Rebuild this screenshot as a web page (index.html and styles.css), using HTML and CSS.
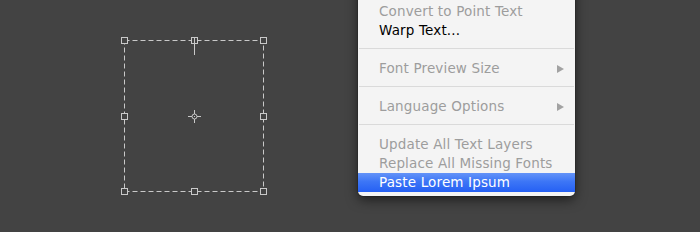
FILE: index.html
```html
<!DOCTYPE html>
<html>
<head>
<meta charset="utf-8">
<link rel="stylesheet" href="styles.css">
</head>
<body>
<div class="stage">
  <svg class="bbox" width="148" height="160" viewBox="0 0 148 160">
    <rect x="4.5" y="4.5" width="139" height="151" fill="none" stroke="#c9c9c9" stroke-width="1" stroke-dasharray="5 3"/>
    <g fill="#434343" stroke="#c9c9c9" stroke-width="1">
      <rect x="1.5" y="1.5" width="6" height="6"/>
      <rect x="71.5" y="1.5" width="6" height="6"/>
      <rect x="140.5" y="1.5" width="6" height="6"/>
      <rect x="1.5" y="77.5" width="6" height="6"/>
      <rect x="140.5" y="77.5" width="6" height="6"/>
      <rect x="1.5" y="152.5" width="6" height="6"/>
      <rect x="71.5" y="152.5" width="6" height="6"/>
      <rect x="140.5" y="152.5" width="6" height="6"/>
    </g>
    <line x1="74.5" y1="1" x2="74.5" y2="19" stroke="#c9c9c9" stroke-width="1"/>
    <g stroke="#c9c9c9" stroke-width="1" fill="none">
      <circle cx="74.5" cy="80.5" r="2.5"/>
      <line x1="68" y1="80.5" x2="72" y2="80.5"/>
      <line x1="77" y1="80.5" x2="81" y2="80.5"/>
      <line x1="74.5" y1="74" x2="74.5" y2="78"/>
      <line x1="74.5" y1="83" x2="74.5" y2="87"/>
    </g>
    <rect x="74" y="80" width="1" height="1" fill="#c9c9c9"/>
  </svg>

  <div class="menu">
    <div class="item spacer"></div>
    <div class="item off">Convert to Point Text</div>
    <div class="item">Warp Text...</div>
    <div class="sep"></div>
    <div class="item off">Font Preview Size<span class="arrow"></span></div>
    <div class="sep"></div>
    <div class="item off">Language Options<span class="arrow"></span></div>
    <div class="sep"></div>
    <div class="item off">Update All Text Layers</div>
    <div class="item off">Replace All Missing Fonts</div>
    <div class="item hi">Paste Lorem Ipsum</div>
  </div>
</div>
</body>
</html>
```
FILE: styles.css
```css
html, body {
  margin: 0;
  padding: 0;
  background: #434343;
  width: 700px;
  height: 232px;
  overflow: hidden;
}

.stage {
  display: flex;
  align-items: flex-start;
}

.bbox {
  display: block;
  margin-left: 120px;
  margin-top: 36px;
  flex: none;
}

.menu {
  flex: none;
  width: 217px;
  margin-left: 90px;
  margin-top: -21px;
  padding: 4px 0;
  background: #f4f4f4;
  border-radius: 0 0 5px 5px;
  box-shadow: 0 4px 12px rgba(0, 0, 0, 0.55), 0 0 0 1px rgba(0, 0, 0, 0.12);
  font-family: "DejaVu Sans", "Liberation Sans", sans-serif;
  font-size: 13.5px;
  letter-spacing: 0.15px;
}

.item {
  height: 19px;
  line-height: 19px;
  padding: 0 11px 0 21px;
  color: #000;
  display: flex;
  align-items: center;
  justify-content: space-between;
  white-space: nowrap;
}

.item.off {
  color: #9d9d9d;
}

.item.hi {
  color: #fff;
  background: linear-gradient(to bottom, #6393f8 0%, #3d76f6 45%, #2560f4 100%);
}

.sep {
  height: 1px;
  background: #dadada;
  margin: 8px 1px 10px 1px;
}

.arrow {
  width: 0;
  height: 0;
  border-top: 4px solid transparent;
  border-bottom: 4px solid transparent;
  border-left: 7px solid #a2a2a2;
}
```
